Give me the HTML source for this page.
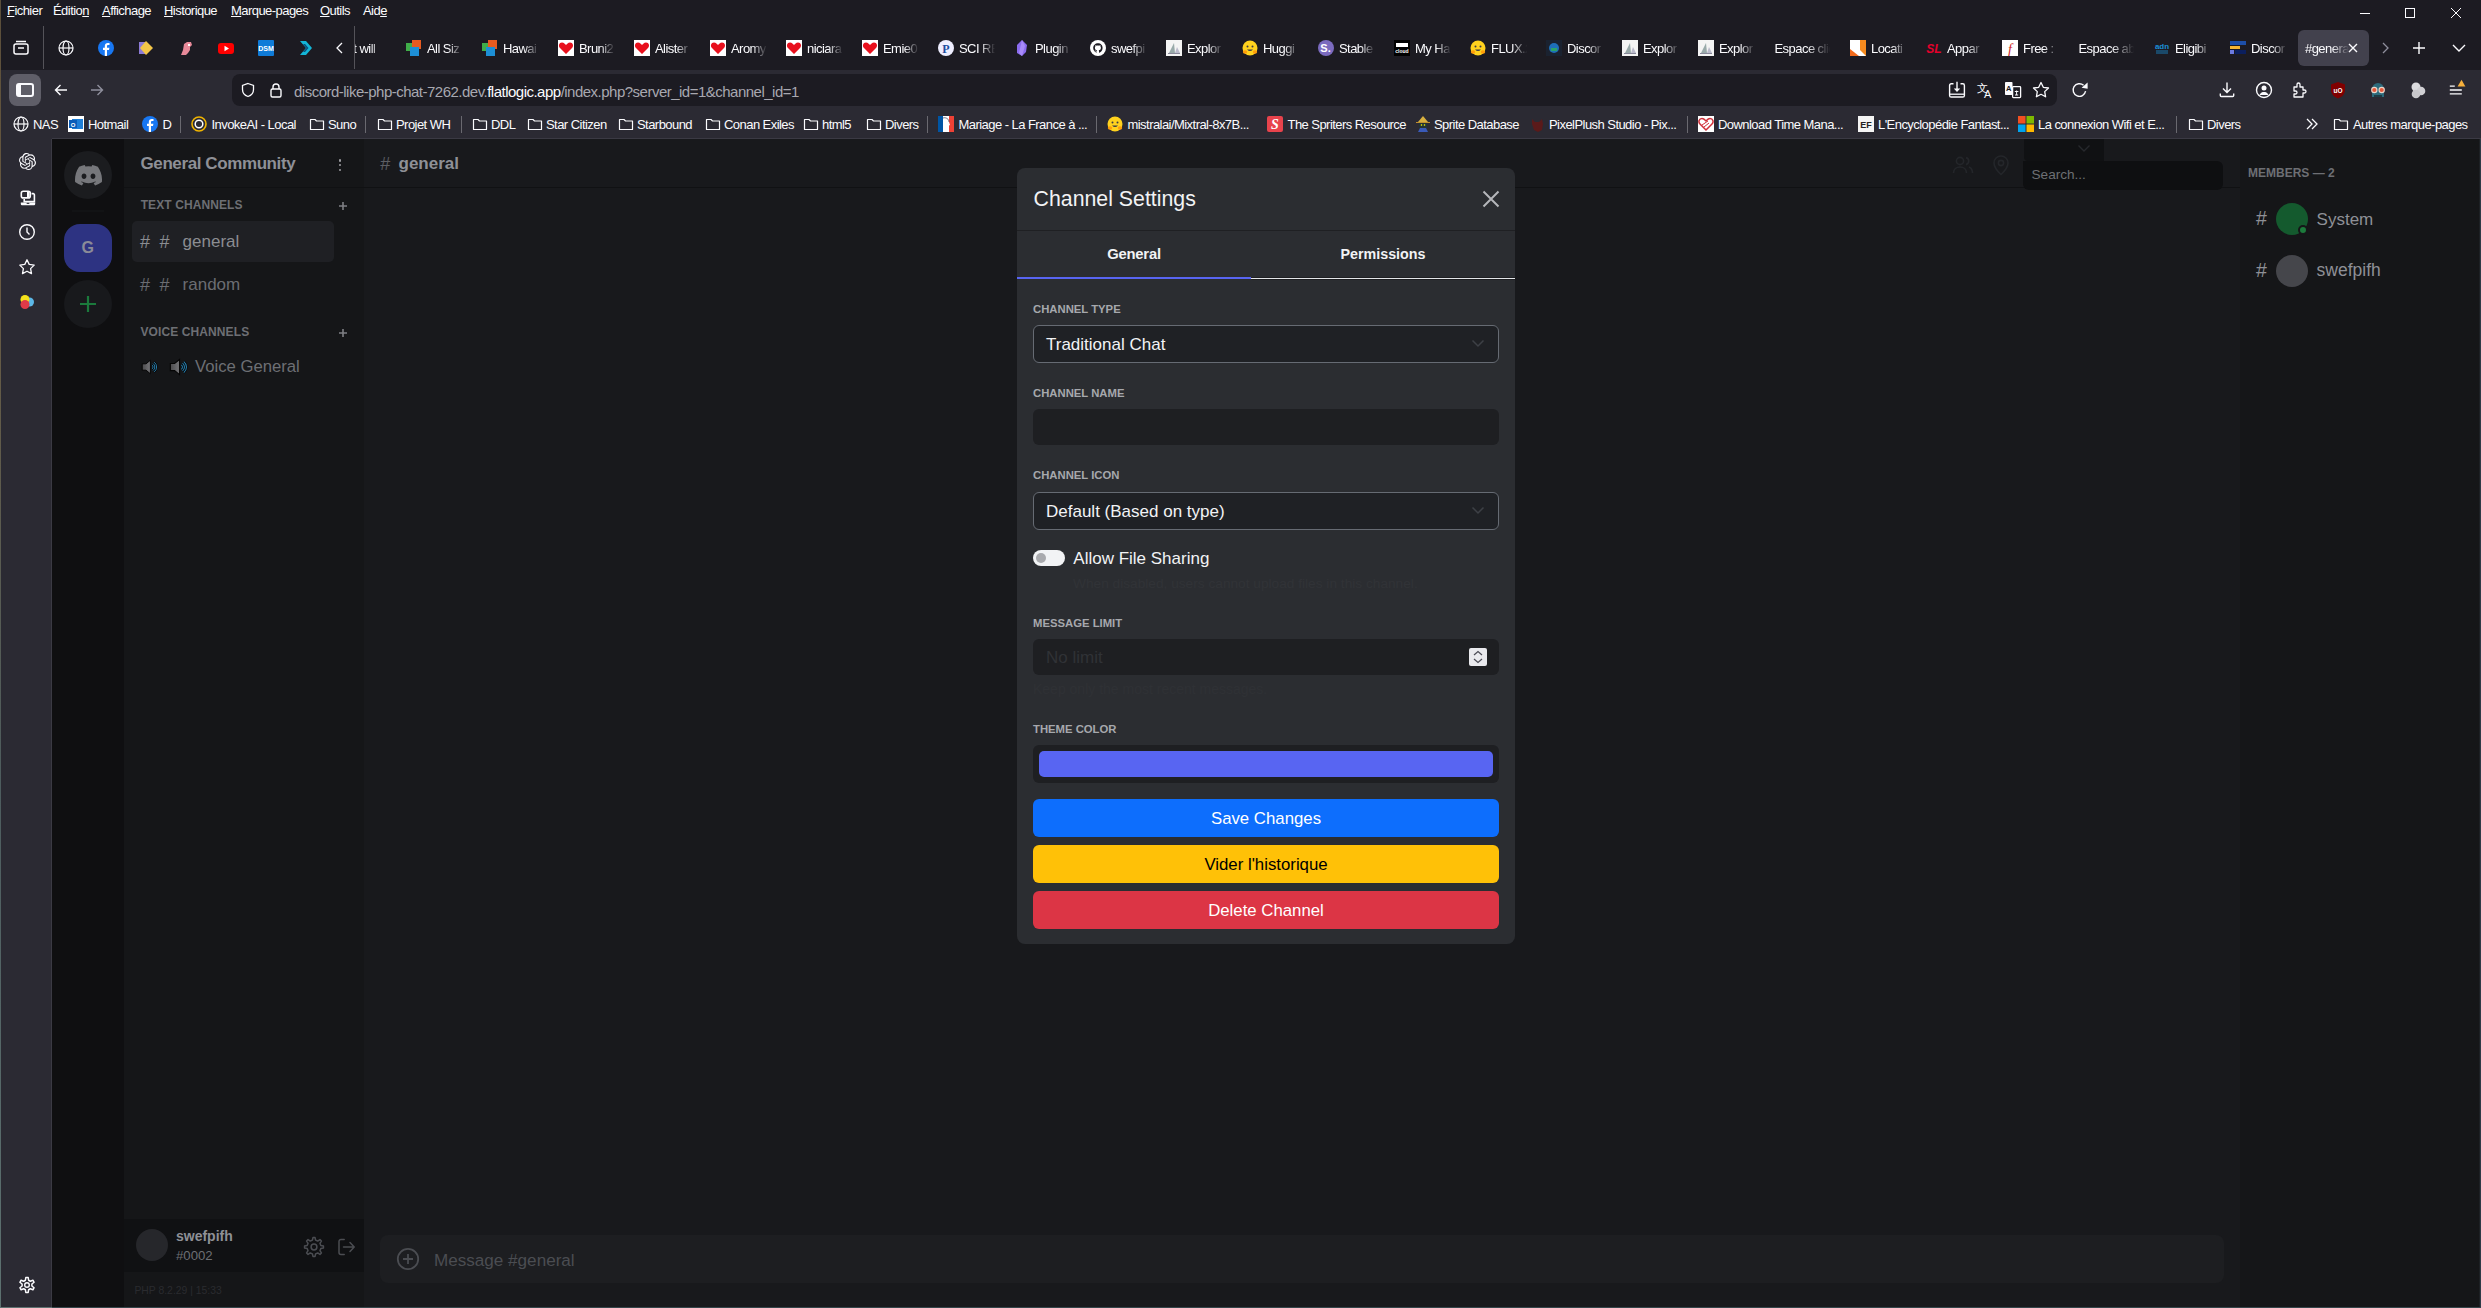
<!DOCTYPE html>
<html><head><meta charset="utf-8">
<style>
*{margin:0;padding:0;box-sizing:border-box}
html,body{width:2481px;height:1308px;overflow:hidden}
body{position:relative;background:linear-gradient(#5a4e3a,#6a5a40 20%,#4d5c5e 60%,#5d7170);font-family:"Liberation Sans",sans-serif;color:#fbfbfe}
.a{position:absolute;white-space:nowrap}
.r{position:absolute}
u{text-decoration:underline;text-underline-offset:1px;text-decoration-thickness:1px}
</style></head><body>
<div class="r" style="left:1px;top:0px;width:2480px;height:70px;background:#1c1b22;"></div>
<div class="r" style="left:1px;top:70px;width:2480px;height:69px;background:#2b2a33;"></div>
<div class="a" style="left:7px;top:3.60px;font-size:13px;line-height:13px;color:#fbfbfe;font-weight:400;letter-spacing:-0.55px"><u>F</u>ichier</div>
<div class="a" style="left:53px;top:3.60px;font-size:13px;line-height:13px;color:#fbfbfe;font-weight:400;letter-spacing:-0.55px">Éditio<u>n</u></div>
<div class="a" style="left:102px;top:3.60px;font-size:13px;line-height:13px;color:#fbfbfe;font-weight:400;letter-spacing:-0.55px"><u>A</u>ffichage</div>
<div class="a" style="left:164px;top:3.60px;font-size:13px;line-height:13px;color:#fbfbfe;font-weight:400;letter-spacing:-0.55px"><u>H</u>istorique</div>
<div class="a" style="left:231px;top:3.60px;font-size:13px;line-height:13px;color:#fbfbfe;font-weight:400;letter-spacing:-0.55px"><u>M</u>arque-pages</div>
<div class="a" style="left:320px;top:3.60px;font-size:13px;line-height:13px;color:#fbfbfe;font-weight:400;letter-spacing:-0.55px"><u>O</u>utils</div>
<div class="a" style="left:363px;top:3.60px;font-size:13px;line-height:13px;color:#fbfbfe;font-weight:400;letter-spacing:-0.55px">Aid<u>e</u></div>
<svg class="r" style="left:2359.0px;top:6.5px;" width="12" height="12" viewBox="0 0 12 12"><path d="M1 6.5h10" stroke="#fbfbfe" stroke-width="1"/></svg>
<svg class="r" style="left:2404.0px;top:6.5px;" width="12" height="12" viewBox="0 0 12 12"><rect x="1.5" y="1.5" width="9" height="9" fill="none" stroke="#fbfbfe" stroke-width="1"/></svg>
<svg class="r" style="left:2450.0px;top:6.5px;" width="12" height="12" viewBox="0 0 12 12"><path d="M1 1L11 11M11 1L1 11" stroke="#fbfbfe" stroke-width="1"/></svg>
<svg class="r" style="left:12.0px;top:39.0px;" width="18" height="18" viewBox="0 0 18 18"><rect x="2" y="5" width="14" height="10" rx="2" fill="none" stroke="#fbfbfe" stroke-width="1.5"/><path d="M4 2.5h10" stroke="#fbfbfe" stroke-width="1.5"/><path d="M6 9h6" stroke="#fbfbfe" stroke-width="1.5"/></svg>
<div class="r" style="left:43px;top:26px;width:1px;height:43px;background:rgba(251,251,254,0.25);"></div>
<div class="r" style="left:354px;top:26px;width:1px;height:43px;background:rgba(251,251,254,0.25);"></div>
<svg class="r" style="left:58.0px;top:40.0px;" width="16" height="16" viewBox="0 0 16 16"><circle cx="8" cy="8" r="7" fill="none" stroke="#fbfbfe" stroke-width="1.2"/><ellipse cx="8" cy="8" rx="3" ry="7" fill="none" stroke="#fbfbfe" stroke-width="1.2"/><path d="M1 8h14" stroke="#fbfbfe" stroke-width="1.2"/></svg>
<svg class="r" style="left:98.0px;top:40.0px;" width="16" height="16" viewBox="0 0 16 16"><circle cx="8" cy="8" r="8" fill="#1877f2"/><path d="M9 16V10h2l.4-2.3H9V6.3c0-.7.3-1.2 1.3-1.2h1.2V3.1C11 3 10.4 3 9.8 3 8 3 6.8 4 6.8 6v1.7H5V10h1.8v6z" fill="#fff"/></svg>
<svg class="r" style="left:138.0px;top:40.0px;" width="16" height="16" viewBox="0 0 16 16"><rect x="1" y="2" width="7" height="12" fill="#8c7bd6"/><path d="M8 1l7 7-7 7-6-7z" fill="#f3c648"/></svg>
<svg class="r" style="left:178.0px;top:40.0px;" width="16" height="16" viewBox="0 0 16 16"><path d="M3 15l2-5 1-6 3-2h4l1 3-2 2v3l-2 3-2 2z" fill="#e88a9a"/><rect x="10" y="4" width="2" height="2" fill="#fff"/></svg>
<svg class="r" style="left:218.0px;top:40.0px;" width="16" height="16" viewBox="0 0 16 16"><rect x="0" y="3" width="16" height="11" rx="3" fill="#ff0000"/><path d="M6.5 5.8v5.4L11 8.5z" fill="#fff"/></svg>
<svg class="r" style="left:258.0px;top:40.0px;" width="16" height="16" viewBox="0 0 16 16"><rect x="0" y="0" width="16" height="16" rx="1" fill="#0f7bd8"/><text x="8" y="11" font-size="7" font-family="Liberation Sans" font-weight="700" fill="#fff" text-anchor="middle">DSM</text></svg>
<svg class="r" style="left:298.0px;top:40.0px;" width="16" height="16" viewBox="0 0 16 16"><path d="M2 1h6l6 7-6 7H2l6-7z" fill="#13b5d6"/><path d="M5 4h2l3.5 4L7 12H5l3.5-4z" fill="#0a4d7a"/></svg>
<svg class="r" style="left:335.0px;top:40.0px;" width="10" height="16" viewBox="0 0 10 16"><path d="M7 3L2 8l5 5" fill="none" stroke="#fbfbfe" stroke-width="1.3"/></svg>
<div class="a" style="left:355px;top:39px;width:30px;height:20px;overflow:hidden;-webkit-mask-image:linear-gradient(to right,#000 50%,transparent)"><div style="position:absolute;left:-4px;top:0;font-size:13px;line-height:20px;color:#fbfbfe;letter-spacing:-0.55px">it will</div></div>
<svg class="r" style="left:405.5px;top:40.0px;" width="16" height="16" viewBox="0 0 16 16"><rect x="0" y="3" width="8" height="8" fill="#3fae49"/><rect x="6" y="0" width="9" height="9" fill="#e85b20"/><rect x="4" y="7" width="9" height="9" fill="#1d8fd6"/></svg>
<div class="a" style="left:427.0px;top:39px;width:38px;height:20px;overflow:hidden;-webkit-mask-image:linear-gradient(to right,#000 55%,transparent 95%)"><div style="position:absolute;left:0;top:0;font-size:13px;line-height:20px;color:#fbfbfe;letter-spacing:-0.55px">All Siz</div></div>
<svg class="r" style="left:481.5px;top:40.0px;" width="16" height="16" viewBox="0 0 16 16"><rect x="0" y="3" width="8" height="8" fill="#3fae49"/><rect x="6" y="0" width="9" height="9" fill="#e85b20"/><rect x="4" y="7" width="9" height="9" fill="#1d8fd6"/></svg>
<div class="a" style="left:503.0px;top:39px;width:38px;height:20px;overflow:hidden;-webkit-mask-image:linear-gradient(to right,#000 55%,transparent 95%)"><div style="position:absolute;left:0;top:0;font-size:13px;line-height:20px;color:#fbfbfe;letter-spacing:-0.55px">Hawai</div></div>
<svg class="r" style="left:557.5px;top:40.0px;" width="16" height="16" viewBox="0 0 16 16"><rect width="16" height="16" fill="#fff"/><path d="M8 14L2 8C0 6 1 2.5 4 2.5c2 0 3 1.5 4 2.5 1-1 2-2.5 4-2.5 3 0 4 3.5 2 5.5z" fill="#e8101d"/></svg>
<div class="a" style="left:579.0px;top:39px;width:38px;height:20px;overflow:hidden;-webkit-mask-image:linear-gradient(to right,#000 55%,transparent 95%)"><div style="position:absolute;left:0;top:0;font-size:13px;line-height:20px;color:#fbfbfe;letter-spacing:-0.55px">Bruni2</div></div>
<svg class="r" style="left:633.5px;top:40.0px;" width="16" height="16" viewBox="0 0 16 16"><rect width="16" height="16" fill="#fff"/><path d="M8 14L2 8C0 6 1 2.5 4 2.5c2 0 3 1.5 4 2.5 1-1 2-2.5 4-2.5 3 0 4 3.5 2 5.5z" fill="#e8101d"/></svg>
<div class="a" style="left:655.0px;top:39px;width:38px;height:20px;overflow:hidden;-webkit-mask-image:linear-gradient(to right,#000 55%,transparent 95%)"><div style="position:absolute;left:0;top:0;font-size:13px;line-height:20px;color:#fbfbfe;letter-spacing:-0.55px">Alister</div></div>
<svg class="r" style="left:709.5px;top:40.0px;" width="16" height="16" viewBox="0 0 16 16"><rect width="16" height="16" fill="#fff"/><path d="M8 14L2 8C0 6 1 2.5 4 2.5c2 0 3 1.5 4 2.5 1-1 2-2.5 4-2.5 3 0 4 3.5 2 5.5z" fill="#e8101d"/></svg>
<div class="a" style="left:731.0px;top:39px;width:38px;height:20px;overflow:hidden;-webkit-mask-image:linear-gradient(to right,#000 55%,transparent 95%)"><div style="position:absolute;left:0;top:0;font-size:13px;line-height:20px;color:#fbfbfe;letter-spacing:-0.55px">Aromy</div></div>
<svg class="r" style="left:785.5px;top:40.0px;" width="16" height="16" viewBox="0 0 16 16"><rect width="16" height="16" fill="#fff"/><path d="M8 14L2 8C0 6 1 2.5 4 2.5c2 0 3 1.5 4 2.5 1-1 2-2.5 4-2.5 3 0 4 3.5 2 5.5z" fill="#e8101d"/></svg>
<div class="a" style="left:807.0px;top:39px;width:38px;height:20px;overflow:hidden;-webkit-mask-image:linear-gradient(to right,#000 55%,transparent 95%)"><div style="position:absolute;left:0;top:0;font-size:13px;line-height:20px;color:#fbfbfe;letter-spacing:-0.55px">niciara</div></div>
<svg class="r" style="left:861.5px;top:40.0px;" width="16" height="16" viewBox="0 0 16 16"><rect width="16" height="16" fill="#fff"/><path d="M8 14L2 8C0 6 1 2.5 4 2.5c2 0 3 1.5 4 2.5 1-1 2-2.5 4-2.5 3 0 4 3.5 2 5.5z" fill="#e8101d"/></svg>
<div class="a" style="left:883.0px;top:39px;width:38px;height:20px;overflow:hidden;-webkit-mask-image:linear-gradient(to right,#000 55%,transparent 95%)"><div style="position:absolute;left:0;top:0;font-size:13px;line-height:20px;color:#fbfbfe;letter-spacing:-0.55px">Emie0</div></div>
<svg class="r" style="left:937.5px;top:40.0px;" width="16" height="16" viewBox="0 0 16 16"><circle cx="8" cy="8" r="8" fill="#eef"/><text x="8" y="12.5" font-size="12" font-family="Liberation Serif" font-weight="700" fill="#1c4ba0" text-anchor="middle">P</text></svg>
<div class="a" style="left:959.0px;top:39px;width:38px;height:20px;overflow:hidden;-webkit-mask-image:linear-gradient(to right,#000 55%,transparent 95%)"><div style="position:absolute;left:0;top:0;font-size:13px;line-height:20px;color:#fbfbfe;letter-spacing:-0.55px">SCI RE</div></div>
<svg class="r" style="left:1013.5px;top:40.0px;" width="16" height="16" viewBox="0 0 16 16"><path d="M8 0l5 5-1 7-4 4-5-3 0-8z" fill="#8b6cef"/><path d="M8 0l3 6-3 10-3-3z" fill="#a88bfa"/></svg>
<div class="a" style="left:1035.0px;top:39px;width:38px;height:20px;overflow:hidden;-webkit-mask-image:linear-gradient(to right,#000 55%,transparent 95%)"><div style="position:absolute;left:0;top:0;font-size:13px;line-height:20px;color:#fbfbfe;letter-spacing:-0.55px">Plugin</div></div>
<svg class="r" style="left:1089.5px;top:40.0px;" width="16" height="16" viewBox="0 0 16 16"><circle cx="8" cy="8" r="8" fill="#fff"/><path d="M8 3.2c-2.7 0-4.8 2.1-4.8 4.8 0 2.1 1.4 3.9 3.3 4.6.2 0 .3-.1.3-.2v-.9c-1.3.3-1.6-.6-1.6-.6-.2-.6-.5-.7-.5-.7-.4-.3 0-.3 0-.3.5 0 .7.5.7.5.4.7 1.1.5 1.4.4 0-.3.2-.5.3-.6-1.1-.1-2.2-.5-2.2-2.4 0-.5.2-1 .5-1.3-.1-.1-.2-.6 0-1.3 0 0 .4-.1 1.3.5.4-.1.8-.2 1.2-.2s.8.1 1.2.2c.9-.6 1.3-.5 1.3-.5.3.7.1 1.2 0 1.3.3.3.5.8.5 1.3 0 1.9-1.1 2.3-2.2 2.4.2.2.3.5.3.9v1.4c0 .1.1.3.3.2 1.9-.6 3.3-2.4 3.3-4.6C12.8 5.3 10.7 3.2 8 3.2z" fill="#1c1b22"/></svg>
<div class="a" style="left:1111.0px;top:39px;width:38px;height:20px;overflow:hidden;-webkit-mask-image:linear-gradient(to right,#000 55%,transparent 95%)"><div style="position:absolute;left:0;top:0;font-size:13px;line-height:20px;color:#fbfbfe;letter-spacing:-0.55px">swefpi</div></div>
<svg class="r" style="left:1165.5px;top:40.0px;" width="16" height="16" viewBox="0 0 16 16"><rect width="16" height="16" fill="#f4f4f4"/><path d="M3 13l5-10 1 10z" fill="#9aa"/><path d="M9 13l2-6 3 6z" fill="#bbc"/><path d="M2 13.5h12" stroke="#889" stroke-width="1"/></svg>
<div class="a" style="left:1187.0px;top:39px;width:38px;height:20px;overflow:hidden;-webkit-mask-image:linear-gradient(to right,#000 55%,transparent 95%)"><div style="position:absolute;left:0;top:0;font-size:13px;line-height:20px;color:#fbfbfe;letter-spacing:-0.55px">Explor</div></div>
<svg class="r" style="left:1241.5px;top:40.0px;" width="16" height="16" viewBox="0 0 16 16"><circle cx="8" cy="8" r="7.5" fill="#ffd21e"/><circle cx="5.5" cy="6.5" r="1" fill="#3a3b45"/><circle cx="10.5" cy="6.5" r="1" fill="#3a3b45"/><path d="M5 9.5q3 3 6 0" fill="#3a3b45"/><ellipse cx="3" cy="12" rx="2.2" ry="1.8" fill="#ff9d0b"/><ellipse cx="13" cy="12" rx="2.2" ry="1.8" fill="#ff9d0b"/></svg>
<div class="a" style="left:1263.0px;top:39px;width:38px;height:20px;overflow:hidden;-webkit-mask-image:linear-gradient(to right,#000 55%,transparent 95%)"><div style="position:absolute;left:0;top:0;font-size:13px;line-height:20px;color:#fbfbfe;letter-spacing:-0.55px">Huggi</div></div>
<svg class="r" style="left:1317.5px;top:40.0px;" width="16" height="16" viewBox="0 0 16 16"><circle cx="8" cy="8" r="8" fill="#7b6bbf"/><text x="7.5" y="12" font-size="11" font-family="Liberation Sans" font-weight="700" fill="#fff" text-anchor="middle">S.</text></svg>
<div class="a" style="left:1339.0px;top:39px;width:38px;height:20px;overflow:hidden;-webkit-mask-image:linear-gradient(to right,#000 55%,transparent 95%)"><div style="position:absolute;left:0;top:0;font-size:13px;line-height:20px;color:#fbfbfe;letter-spacing:-0.55px">Stable</div></div>
<svg class="r" style="left:1393.5px;top:40.0px;" width="16" height="16" viewBox="0 0 16 16"><rect width="16" height="16" fill="#000"/><rect x="2" y="3" width="12" height="4" fill="#fff"/><text x="8" y="13" font-size="5" font-family="Liberation Sans" font-weight="700" fill="#fff" text-anchor="middle">cloud</text></svg>
<div class="a" style="left:1415.0px;top:39px;width:38px;height:20px;overflow:hidden;-webkit-mask-image:linear-gradient(to right,#000 55%,transparent 95%)"><div style="position:absolute;left:0;top:0;font-size:13px;line-height:20px;color:#fbfbfe;letter-spacing:-0.55px">My Ha</div></div>
<svg class="r" style="left:1469.5px;top:40.0px;" width="16" height="16" viewBox="0 0 16 16"><circle cx="8" cy="8" r="7.5" fill="#ffd21e"/><circle cx="5.5" cy="6.5" r="1" fill="#3a3b45"/><circle cx="10.5" cy="6.5" r="1" fill="#3a3b45"/><path d="M5 9.5q3 3 6 0" fill="#3a3b45"/><ellipse cx="3" cy="12" rx="2.2" ry="1.8" fill="#ff9d0b"/><ellipse cx="13" cy="12" rx="2.2" ry="1.8" fill="#ff9d0b"/></svg>
<div class="a" style="left:1491.0px;top:39px;width:38px;height:20px;overflow:hidden;-webkit-mask-image:linear-gradient(to right,#000 55%,transparent 95%)"><div style="position:absolute;left:0;top:0;font-size:13px;line-height:20px;color:#fbfbfe;letter-spacing:-0.55px">FLUX.2</div></div>
<svg class="r" style="left:1545.5px;top:40.0px;" width="16" height="16" viewBox="0 0 16 16"><rect width="16" height="16" fill="#1a2230"/><circle cx="8" cy="8" r="5" fill="#1e6fb8"/><path d="M5 8h6v3H5z" fill="#2aa36b"/></svg>
<div class="a" style="left:1567.0px;top:39px;width:38px;height:20px;overflow:hidden;-webkit-mask-image:linear-gradient(to right,#000 55%,transparent 95%)"><div style="position:absolute;left:0;top:0;font-size:13px;line-height:20px;color:#fbfbfe;letter-spacing:-0.55px">Discor</div></div>
<svg class="r" style="left:1621.5px;top:40.0px;" width="16" height="16" viewBox="0 0 16 16"><rect width="16" height="16" fill="#f4f4f4"/><path d="M3 13l5-10 1 10z" fill="#9aa"/><path d="M9 13l2-6 3 6z" fill="#bbc"/><path d="M2 13.5h12" stroke="#889" stroke-width="1"/></svg>
<div class="a" style="left:1643.0px;top:39px;width:38px;height:20px;overflow:hidden;-webkit-mask-image:linear-gradient(to right,#000 55%,transparent 95%)"><div style="position:absolute;left:0;top:0;font-size:13px;line-height:20px;color:#fbfbfe;letter-spacing:-0.55px">Explor</div></div>
<svg class="r" style="left:1697.5px;top:40.0px;" width="16" height="16" viewBox="0 0 16 16"><rect width="16" height="16" fill="#f4f4f4"/><path d="M3 13l5-10 1 10z" fill="#9aa"/><path d="M9 13l2-6 3 6z" fill="#bbc"/><path d="M2 13.5h12" stroke="#889" stroke-width="1"/></svg>
<div class="a" style="left:1719.0px;top:39px;width:38px;height:20px;overflow:hidden;-webkit-mask-image:linear-gradient(to right,#000 55%,transparent 95%)"><div style="position:absolute;left:0;top:0;font-size:13px;line-height:20px;color:#fbfbfe;letter-spacing:-0.55px">Explor</div></div>
<div class="a" style="left:1774.5px;top:39px;width:58px;height:20px;overflow:hidden;-webkit-mask-image:linear-gradient(to right,#000 55%,transparent 95%)"><div style="position:absolute;left:0;top:0;font-size:13px;line-height:20px;color:#fbfbfe;letter-spacing:-0.55px">Espace clie</div></div>
<svg class="r" style="left:1849.5px;top:40.0px;" width="16" height="16" viewBox="0 0 16 16"><rect width="16" height="16" fill="#fff"/><path d="M0 16V9l9 7z" fill="#f26a1b"/><path d="M10 0h6v16l-6-6z" fill="#f68b1f"/></svg>
<div class="a" style="left:1871.0px;top:39px;width:38px;height:20px;overflow:hidden;-webkit-mask-image:linear-gradient(to right,#000 55%,transparent 95%)"><div style="position:absolute;left:0;top:0;font-size:13px;line-height:20px;color:#fbfbfe;letter-spacing:-0.55px">Locati</div></div>
<svg class="r" style="left:1925.5px;top:40.0px;" width="16" height="16" viewBox="0 0 16 16"><text x="8" y="13" font-size="12" font-family="Liberation Sans" font-weight="700" font-style="italic" fill="#e4002b" text-anchor="middle">SL</text></svg>
<div class="a" style="left:1947.0px;top:39px;width:38px;height:20px;overflow:hidden;-webkit-mask-image:linear-gradient(to right,#000 55%,transparent 95%)"><div style="position:absolute;left:0;top:0;font-size:13px;line-height:20px;color:#fbfbfe;letter-spacing:-0.55px">Appar</div></div>
<svg class="r" style="left:2001.5px;top:40.0px;" width="16" height="16" viewBox="0 0 16 16"><rect width="16" height="16" fill="#fff"/><text x="8" y="13.5" font-size="14" font-family="Liberation Serif" font-style="italic" fill="#cd1e25" text-anchor="middle">f</text></svg>
<div class="a" style="left:2023.0px;top:39px;width:38px;height:20px;overflow:hidden;-webkit-mask-image:linear-gradient(to right,#000 55%,transparent 95%)"><div style="position:absolute;left:0;top:0;font-size:13px;line-height:20px;color:#fbfbfe;letter-spacing:-0.55px">Free :</div></div>
<div class="a" style="left:2078.5px;top:39px;width:58px;height:20px;overflow:hidden;-webkit-mask-image:linear-gradient(to right,#000 55%,transparent 95%)"><div style="position:absolute;left:0;top:0;font-size:13px;line-height:20px;color:#fbfbfe;letter-spacing:-0.55px">Espace abc</div></div>
<svg class="r" style="left:2153.5px;top:40.0px;" width="16" height="16" viewBox="0 0 16 16"><text x="8" y="9" font-size="8" font-family="Liberation Sans" font-weight="700" fill="#1b8fd6" text-anchor="middle">adn</text><path d="M2 11h12M2 13h12" stroke="#1b8fd6" stroke-width=".8"/></svg>
<div class="a" style="left:2175.0px;top:39px;width:38px;height:20px;overflow:hidden;-webkit-mask-image:linear-gradient(to right,#000 55%,transparent 95%)"><div style="position:absolute;left:0;top:0;font-size:13px;line-height:20px;color:#fbfbfe;letter-spacing:-0.55px">Eligibi</div></div>
<svg class="r" style="left:2229.5px;top:40.0px;" width="16" height="16" viewBox="0 0 16 16"><rect x="0" y="1" width="16" height="4" fill="#1d4fa8"/><rect x="0" y="6" width="10" height="3" fill="#f6b632"/><rect x="0" y="10" width="4" height="4" fill="#6c7ae0"/><rect x="5" y="10" width="11" height="4" fill="#0b1f5e"/></svg>
<div class="a" style="left:2251.0px;top:39px;width:38px;height:20px;overflow:hidden;-webkit-mask-image:linear-gradient(to right,#000 55%,transparent 95%)"><div style="position:absolute;left:0;top:0;font-size:13px;line-height:20px;color:#fbfbfe;letter-spacing:-0.55px">Discor</div></div>
<div class="r" style="left:2297.5px;top:30px;width:71.5px;height:36px;background:#42414d;border-radius:6px"></div>
<div class="a" style="left:2305px;top:39px;width:44px;height:20px;overflow:hidden;-webkit-mask-image:linear-gradient(to right,#000 60%,transparent)"><div style="position:absolute;left:0;top:0;font-size:13px;line-height:20px;color:#fbfbfe;letter-spacing:-0.55px">#general</div></div>
<svg class="r" style="left:2347.0px;top:42.0px;" width="12" height="12" viewBox="0 0 12 12"><path d="M2 2L10 10M10 2L2 10" stroke="#fbfbfe" stroke-width="1.4"/></svg>
<svg class="r" style="left:2380.0px;top:40.0px;" width="10" height="16" viewBox="0 0 10 16"><path d="M3 3l5 5-5 5" fill="none" stroke="#8f8f9d" stroke-width="1.3"/></svg>
<svg class="r" style="left:2411.0px;top:40.0px;" width="16" height="16" viewBox="0 0 16 16"><path d="M8 2v12M2 8h12" stroke="#fbfbfe" stroke-width="1.4"/></svg>
<svg class="r" style="left:2451.0px;top:40.0px;" width="16" height="16" viewBox="0 0 16 16"><path d="M2 5l6 6 6-6" fill="none" stroke="#fbfbfe" stroke-width="1.4"/></svg>
<div class="r" style="left:9px;top:74px;width:32px;height:32px;background:#5f5e68;border-radius:8px"></div>
<svg class="r" style="left:16.0px;top:83.0px;" width="18" height="14" viewBox="0 0 18 14"><rect x="1" y="1" width="16" height="12" rx="2" fill="none" stroke="#fbfbfe" stroke-width="2"/><rect x="1" y="1" width="4" height="12" rx="1" fill="#fbfbfe"/></svg>
<svg class="r" style="left:53.0px;top:82.0px;" width="16" height="16" viewBox="0 0 16 16"><path d="M14 8H2.5M7.5 3L2.5 8l5 5" fill="none" stroke="#fbfbfe" stroke-width="1.4"/></svg>
<svg class="r" style="left:89.0px;top:82.0px;" width="16" height="16" viewBox="0 0 16 16"><path d="M2 8h11.5M8.5 3l5 5-5 5" fill="none" stroke="#8f8f9d" stroke-width="1.4"/></svg>
<div class="r" style="left:232px;top:74px;width:1825px;height:32px;background:#1c1b22;border-radius:8px"></div>
<svg class="r" style="left:240.0px;top:82.0px;" width="16" height="16" viewBox="0 0 16 16"><path d="M8 1.5l5.5 2v4c0 3.5-2.5 6-5.5 7-3-1-5.5-3.5-5.5-7v-4z" fill="none" stroke="#fbfbfe" stroke-width="1.3"/></svg>
<svg class="r" style="left:268.0px;top:82.0px;" width="16" height="16" viewBox="0 0 16 16"><rect x="3" y="7" width="10" height="8" rx="1.5" fill="none" stroke="#fbfbfe" stroke-width="1.4"/><path d="M5 7V5a3 3 0 0 1 6 0v2" fill="none" stroke="#fbfbfe" stroke-width="1.4"/></svg>
<div class="a" style="left:294px;top:83.55px;font-size:15px;line-height:15px;color:#fbfbfe;font-weight:400;letter-spacing:-0.51px"><span style="color:#a8a8b0">discord-like-php-chat-7262.dev.</span>flatlogic.app<span style="color:#a8a8b0">/index.php?server_id=1&amp;channel_id=1</span></div>
<svg class="r" style="left:1948.0px;top:81.0px;" width="18" height="18" viewBox="0 0 18 18"><path d="M5.5 2.8H3.2a1.6 1.6 0 0 0-1.6 1.6v10a1.6 1.6 0 0 0 1.6 1.6h11.6a1.6 1.6 0 0 0 1.6-1.6v-10a1.6 1.6 0 0 0-1.6-1.6h-2.3" fill="none" stroke="#fbfbfe" stroke-width="1.4"/><path d="M1.6 13.2h14.8" stroke="#fbfbfe" stroke-width="1.3"/><path d="M9 0.8v8" stroke="#fbfbfe" stroke-width="1.4"/><path d="M5.8 7.6h6.4L9 11z" fill="#fbfbfe"/></svg>
<svg class="r" style="left:1976.0px;top:81.0px;" width="18" height="18" viewBox="0 0 18 18"><text x="1" y="11" font-size="11" font-family="Liberation Sans" fill="#fbfbfe">文</text><text x="8" y="17" font-size="11" font-family="Liberation Sans" fill="#fbfbfe">A</text></svg>
<svg class="r" style="left:2004.0px;top:81.0px;" width="18" height="18" viewBox="0 0 18 18"><rect x="1" y="1" width="7.5" height="13" rx=".8" fill="#fbfbfe"/><text x="4.8" y="9.5" font-size="7.5" font-family="Liberation Sans" font-weight="700" fill="#1c1b22" text-anchor="middle">A</text><rect x="8.6" y="5.6" width="8" height="11" rx=".8" fill="#1c1b22" stroke="#fbfbfe" stroke-width="1.3"/><path d="M10.8 10.5h3.6M12.6 9.5v4.5M11 14h3.2" stroke="#fbfbfe" stroke-width="1"/></svg>
<svg class="r" style="left:2032.0px;top:81.0px;" width="18" height="18" viewBox="0 0 18 18"><path d="M9 1.5l2.3 4.8 5.2.7-3.8 3.6.9 5.2L9 13.3l-4.6 2.5.9-5.2L1.5 7l5.2-.7z" fill="none" stroke="#fbfbfe" stroke-width="1.3" stroke-linejoin="round"/></svg>
<svg class="r" style="left:2071.0px;top:81.0px;" width="18" height="18" viewBox="0 0 18 18"><path d="M14.6 10.2A6.3 6.3 0 1 1 12.6 4.3" fill="none" stroke="#fbfbfe" stroke-width="1.4"/><path d="M10.6 6.8L16.6 1.6v6.2z" fill="#fbfbfe"/></svg>
<svg class="r" style="left:2218.0px;top:81.0px;" width="18" height="18" viewBox="0 0 18 18"><path d="M9 1.5v10M5 7.5l4 4 4-4" fill="none" stroke="#fbfbfe" stroke-width="1.4"/><path d="M2.3 12.5v2a1 1 0 0 0 1 1h11.4a1 1 0 0 0 1-1v-2" fill="none" stroke="#fbfbfe" stroke-width="1.4"/></svg>
<svg class="r" style="left:2255.0px;top:81.0px;" width="18" height="18" viewBox="0 0 18 18"><circle cx="9" cy="9" r="7.5" fill="none" stroke="#fbfbfe" stroke-width="1.4"/><circle cx="9" cy="7" r="2.5" fill="#fbfbfe"/><path d="M4.5 14c1-2.5 3-3 4.5-3s3.5.5 4.5 3" fill="#fbfbfe"/></svg>
<svg class="r" style="left:2291.0px;top:81.0px;" width="18" height="18" viewBox="0 0 18 18"><path d="M3 6h3V3.5a1.5 1.5 0 0 1 3 0V6h3v3h1.5a1.5 1.5 0 0 1 0 3H12v4H3v-3h1.5a1.5 1.5 0 0 0 0-3H3z" fill="none" stroke="#fbfbfe" stroke-width="1.3" stroke-linejoin="round"/></svg>
<svg class="r" style="left:2329.0px;top:81.0px;" width="18" height="18" viewBox="0 0 18 18"><path d="M9 1l7 2.5V9c0 4-3 7-7 8.5C5 16 2 13 2 9V3.5z" fill="#800000"/><text x="9" y="11.5" font-size="6.5" font-family="Liberation Sans" font-weight="700" fill="#fff" text-anchor="middle">uO</text></svg>
<svg class="r" style="left:2369.0px;top:81.0px;" width="18" height="18" viewBox="0 0 18 18"><path d="M3 8a6 6 0 0 1 12 0v8H3z" fill="#2d6b7c"/><rect x="5" y="14" width="8" height="2" fill="#1d3b44"/><circle cx="5.3" cy="9" r="3.2" fill="#e9d7cc"/><circle cx="12.7" cy="9" r="3.2" fill="#e9d7cc"/><circle cx="5.3" cy="9" r="2.1" fill="#e4583a"/><circle cx="12.7" cy="9" r="2.1" fill="#e4583a"/></svg>
<svg class="r" style="left:2409.0px;top:81.0px;" width="18" height="18" viewBox="0 0 18 18"><circle cx="7" cy="6" r="4.5" fill="#dcdcdf"/><circle cx="12" cy="10" r="4.3" fill="#d0d0d4"/><circle cx="7" cy="13" r="4.3" fill="#c8c8cc"/></svg>
<svg class="r" style="left:2445.0px;top:81.0px;overflow:visible" width="20" height="18" viewBox="0 0 20 18"><path d="M4.8 5.2h5M4.8 9h12M4.8 12.8h12" stroke="#fbfbfe" stroke-width="1.3"/><path d="M16.5 -1.2l3.9 6.8h-7.8z" fill="#f6b03c"/></svg>
<svg class="r" style="left:13.0px;top:116.0px;" width="16" height="16" viewBox="0 0 16 16"><circle cx="8" cy="8" r="7" fill="none" stroke="#fbfbfe" stroke-width="1.2"/><ellipse cx="8" cy="8" rx="3" ry="7" fill="none" stroke="#fbfbfe" stroke-width="1.2"/><path d="M1 8h14" stroke="#fbfbfe" stroke-width="1.2"/></svg>
<div class="a" style="left:33px;top:118.25px;font-size:13px;line-height:13px;color:#fbfbfe;font-weight:400;letter-spacing:-0.55px">NAS</div>
<svg class="r" style="left:68.0px;top:116.0px;" width="16" height="16" viewBox="0 0 16 16"><rect width="16" height="16" fill="#fff"/><rect x="4" y="3" width="11" height="10" fill="#1e7fd8"/><rect x="1" y="4" width="8" height="8" fill="#0a5cb8"/><text x="5" y="10.5" font-size="6" font-family="Liberation Sans" font-weight="700" fill="#fff" text-anchor="middle">O</text></svg>
<div class="a" style="left:88px;top:118.25px;font-size:13px;line-height:13px;color:#fbfbfe;font-weight:400;letter-spacing:-0.55px">Hotmail</div>
<svg class="r" style="left:142.0px;top:116.0px;" width="16" height="16" viewBox="0 0 16 16"><circle cx="8" cy="8" r="8" fill="#1877f2"/><path d="M9 16V10h2l.4-2.3H9V6.3c0-.7.3-1.2 1.3-1.2h1.2V3.1C11 3 10.4 3 9.8 3 8 3 6.8 4 6.8 6v1.7H5V10h1.8v6z" fill="#fff"/></svg>
<div class="a" style="left:162.5px;top:118.25px;font-size:13px;line-height:13px;color:#fbfbfe;font-weight:400;letter-spacing:-0.55px">D</div>
<div class="r" style="left:180px;top:116px;width:1px;height:17px;background:rgba(251,251,254,0.3);"></div>
<svg class="r" style="left:191.0px;top:116.0px;" width="16" height="16" viewBox="0 0 16 16"><circle cx="8" cy="8" r="7" fill="none" stroke="#f0b400" stroke-width="1.6"/><circle cx="8" cy="8" r="3.8" fill="none" stroke="#fff" stroke-width="1.5"/></svg>
<div class="a" style="left:211.5px;top:118.25px;font-size:13px;line-height:13px;color:#fbfbfe;font-weight:400;letter-spacing:-0.55px">InvokeAI - Local</div>
<svg class="r" style="left:308.5px;top:116.0px;" width="16" height="16" viewBox="0 0 16 16"><path d="M1.5 3.5h4.5l1.5 1.5h7v8.5h-13z" fill="none" stroke="#fbfbfe" stroke-width="1.2" stroke-linejoin="round"/></svg>
<div class="a" style="left:328px;top:118.25px;font-size:13px;line-height:13px;color:#fbfbfe;font-weight:400;letter-spacing:-0.55px">Suno</div>
<div class="r" style="left:365px;top:116px;width:1px;height:17px;background:rgba(251,251,254,0.3);"></div>
<svg class="r" style="left:376.5px;top:116.0px;" width="16" height="16" viewBox="0 0 16 16"><path d="M1.5 3.5h4.5l1.5 1.5h7v8.5h-13z" fill="none" stroke="#fbfbfe" stroke-width="1.2" stroke-linejoin="round"/></svg>
<div class="a" style="left:396px;top:118.25px;font-size:13px;line-height:13px;color:#fbfbfe;font-weight:400;letter-spacing:-0.55px">Projet WH</div>
<div class="r" style="left:461px;top:116px;width:1px;height:17px;background:rgba(251,251,254,0.3);"></div>
<svg class="r" style="left:472.0px;top:116.0px;" width="16" height="16" viewBox="0 0 16 16"><path d="M1.5 3.5h4.5l1.5 1.5h7v8.5h-13z" fill="none" stroke="#fbfbfe" stroke-width="1.2" stroke-linejoin="round"/></svg>
<div class="a" style="left:491px;top:118.25px;font-size:13px;line-height:13px;color:#fbfbfe;font-weight:400;letter-spacing:-0.55px">DDL</div>
<svg class="r" style="left:527.0px;top:116.0px;" width="16" height="16" viewBox="0 0 16 16"><path d="M1.5 3.5h4.5l1.5 1.5h7v8.5h-13z" fill="none" stroke="#fbfbfe" stroke-width="1.2" stroke-linejoin="round"/></svg>
<div class="a" style="left:546px;top:118.25px;font-size:13px;line-height:13px;color:#fbfbfe;font-weight:400;letter-spacing:-0.55px">Star Citizen</div>
<svg class="r" style="left:618.0px;top:116.0px;" width="16" height="16" viewBox="0 0 16 16"><path d="M1.5 3.5h4.5l1.5 1.5h7v8.5h-13z" fill="none" stroke="#fbfbfe" stroke-width="1.2" stroke-linejoin="round"/></svg>
<div class="a" style="left:637px;top:118.25px;font-size:13px;line-height:13px;color:#fbfbfe;font-weight:400;letter-spacing:-0.55px">Starbound</div>
<svg class="r" style="left:705.0px;top:116.0px;" width="16" height="16" viewBox="0 0 16 16"><path d="M1.5 3.5h4.5l1.5 1.5h7v8.5h-13z" fill="none" stroke="#fbfbfe" stroke-width="1.2" stroke-linejoin="round"/></svg>
<div class="a" style="left:724px;top:118.25px;font-size:13px;line-height:13px;color:#fbfbfe;font-weight:400;letter-spacing:-0.55px">Conan Exiles</div>
<svg class="r" style="left:803.0px;top:116.0px;" width="16" height="16" viewBox="0 0 16 16"><path d="M1.5 3.5h4.5l1.5 1.5h7v8.5h-13z" fill="none" stroke="#fbfbfe" stroke-width="1.2" stroke-linejoin="round"/></svg>
<div class="a" style="left:822px;top:118.25px;font-size:13px;line-height:13px;color:#fbfbfe;font-weight:400;letter-spacing:-0.55px">html5</div>
<svg class="r" style="left:866.0px;top:116.0px;" width="16" height="16" viewBox="0 0 16 16"><path d="M1.5 3.5h4.5l1.5 1.5h7v8.5h-13z" fill="none" stroke="#fbfbfe" stroke-width="1.2" stroke-linejoin="round"/></svg>
<div class="a" style="left:885px;top:118.25px;font-size:13px;line-height:13px;color:#fbfbfe;font-weight:400;letter-spacing:-0.55px">Divers</div>
<div class="r" style="left:927px;top:116px;width:1px;height:17px;background:rgba(251,251,254,0.3);"></div>
<svg class="r" style="left:938.0px;top:116.0px;" width="16" height="16" viewBox="0 0 16 16"><rect width="16" height="16" fill="#fff"/><rect x="0" y="0" width="5" height="16" fill="#0055a4"/><rect x="11" y="0" width="5" height="16" fill="#ef4135"/><path d="M5 2c3-1 6 1 6 4l1 3-2 1v3l-3 1-2 2z" fill="#fff"/><path d="M5 2c3-1 6 1 6 4" fill="none" stroke="#556" stroke-width=".8"/></svg>
<div class="a" style="left:958.5px;top:118.25px;font-size:13px;line-height:13px;color:#fbfbfe;font-weight:400;letter-spacing:-0.55px">Mariage - La France à ...</div>
<div class="r" style="left:1096px;top:116px;width:1px;height:17px;background:rgba(251,251,254,0.3);"></div>
<svg class="r" style="left:1107.0px;top:116.0px;" width="16" height="16" viewBox="0 0 16 16"><circle cx="8" cy="8" r="7.5" fill="#ffd21e"/><circle cx="5.5" cy="6.5" r="1" fill="#3a3b45"/><circle cx="10.5" cy="6.5" r="1" fill="#3a3b45"/><path d="M5 9.5q3 3 6 0" fill="#3a3b45"/><ellipse cx="3" cy="12" rx="2.2" ry="1.8" fill="#ff9d0b"/><ellipse cx="13" cy="12" rx="2.2" ry="1.8" fill="#ff9d0b"/></svg>
<div class="a" style="left:1127.5px;top:118.25px;font-size:13px;line-height:13px;color:#fbfbfe;font-weight:400;letter-spacing:-0.55px">mistralai/Mixtral-8x7B...</div>
<svg class="r" style="left:1267.0px;top:116.0px;" width="16" height="16" viewBox="0 0 16 16"><rect width="16" height="16" rx="2" fill="#e8434c"/><text x="8" y="13" font-size="14" font-family="Liberation Serif" font-style="italic" font-weight="700" fill="#fff" text-anchor="middle">S</text></svg>
<div class="a" style="left:1287.5px;top:118.25px;font-size:13px;line-height:13px;color:#fbfbfe;font-weight:400;letter-spacing:-0.55px">The Spriters Resource</div>
<svg class="r" style="left:1415.0px;top:116.0px;" width="16" height="16" viewBox="0 0 16 16"><path d="M8 0l5 6H3z" fill="#d8b040"/><path d="M1 6h14v1H1z" fill="#c09030"/><rect x="4" y="7" width="8" height="5" fill="#233"/><circle cx="6.5" cy="9" r=".8" fill="#ff0"/><circle cx="9.5" cy="9" r=".8" fill="#ff0"/><path d="M3 16l2-4h6l2 4z" fill="#3a5ab8"/></svg>
<div class="a" style="left:1434px;top:118.25px;font-size:13px;line-height:13px;color:#fbfbfe;font-weight:400;letter-spacing:-0.55px">Sprite Database</div>
<svg class="r" style="left:1529.0px;top:116.0px;" width="16" height="16" viewBox="0 0 16 16"><path d="M3 3l3 3h4l3-3 1 5-1 6-4 2-4-2-2-6z" fill="#5a1a1a"/></svg>
<div class="a" style="left:1549px;top:118.25px;font-size:13px;line-height:13px;color:#fbfbfe;font-weight:400;letter-spacing:-0.55px">PixelPlush Studio - Pix...</div>
<div class="r" style="left:1687px;top:116px;width:1px;height:17px;background:rgba(251,251,254,0.3);"></div>
<svg class="r" style="left:1698.0px;top:116.0px;" width="16" height="16" viewBox="0 0 16 16"><rect width="16" height="16" fill="#fff"/><path d="M8 14L2 8C0 6 1 2.5 4 2.5c2 0 3 1.5 4 2.5 1-1 2-2.5 4-2.5 3 0 4 3.5 2 5.5z" fill="none" stroke="#d0303a" stroke-width="1.5"/><path d="M4 9l6-4M6 11l5-4" stroke="#d0303a" stroke-width="1"/></svg>
<div class="a" style="left:1718px;top:118.25px;font-size:13px;line-height:13px;color:#fbfbfe;font-weight:400;letter-spacing:-0.55px">Download Time Mana...</div>
<svg class="r" style="left:1858.0px;top:116.0px;" width="16" height="16" viewBox="0 0 16 16"><rect width="16" height="16" fill="#f4f4f4"/><text x="8" y="12" font-size="9" font-family="Liberation Sans" font-weight="700" fill="#222" text-anchor="middle">EF</text></svg>
<div class="a" style="left:1878px;top:118.25px;font-size:13px;line-height:13px;color:#fbfbfe;font-weight:400;letter-spacing:-0.55px">L&#x27;Encyclopédie Fantast...</div>
<svg class="r" style="left:2018.0px;top:116.0px;" width="16" height="16" viewBox="0 0 16 16"><rect x="0" y="0" width="7.5" height="7.5" fill="#f25022"/><rect x="8.5" y="0" width="7.5" height="7.5" fill="#7fba00"/><rect x="0" y="8.5" width="7.5" height="7.5" fill="#00a4ef"/><rect x="8.5" y="8.5" width="7.5" height="7.5" fill="#ffb900"/></svg>
<div class="a" style="left:2038px;top:118.25px;font-size:13px;line-height:13px;color:#fbfbfe;font-weight:400;letter-spacing:-0.55px">La connexion Wifi et E...</div>
<div class="r" style="left:2176px;top:116px;width:1px;height:17px;background:rgba(251,251,254,0.3);"></div>
<svg class="r" style="left:2187.5px;top:116.0px;" width="16" height="16" viewBox="0 0 16 16"><path d="M1.5 3.5h4.5l1.5 1.5h7v8.5h-13z" fill="none" stroke="#fbfbfe" stroke-width="1.2" stroke-linejoin="round"/></svg>
<div class="a" style="left:2207px;top:118.25px;font-size:13px;line-height:13px;color:#fbfbfe;font-weight:400;letter-spacing:-0.55px">Divers</div>
<svg class="r" style="left:2304.0px;top:116.0px;" width="16" height="16" viewBox="0 0 16 16"><path d="M3 3l5 5-5 5M8 3l5 5-5 5" fill="none" stroke="#fbfbfe" stroke-width="1.3"/></svg>
<svg class="r" style="left:2333.0px;top:116.0px;" width="16" height="16" viewBox="0 0 16 16"><path d="M1.5 3.5h4.5l1.5 1.5h7v8.5h-13z" fill="none" stroke="#fbfbfe" stroke-width="1.2" stroke-linejoin="round"/></svg>
<div class="a" style="left:2353px;top:118.25px;font-size:13px;line-height:13px;color:#fbfbfe;font-weight:400;letter-spacing:-0.55px">Autres marque-pages</div>
<div class="r" style="left:1px;top:139px;width:51px;height:1168px;background:#2b2a33;"></div>
<div class="r" style="left:51px;top:139px;width:1px;height:1168px;background:#3b3a44;"></div>
<div class="r" style="left:52px;top:138px;width:2429px;height:1px;background:#3b3a44;"></div>
<svg class="r" style="left:18.5px;top:152.5px;" width="17" height="17" viewBox="0 0 17 17"><path transform="scale(.7083)" d="M22.2819 9.8211a5.9847 5.9847 0 0 0-.5157-4.9108 6.0462 6.0462 0 0 0-6.5098-2.9A6.0651 6.0651 0 0 0 4.9807 4.1818a5.9847 5.9847 0 0 0-3.9977 2.9 6.0462 6.0462 0 0 0 .7427 7.0966 5.98 5.98 0 0 0 .511 4.9107 6.051 6.051 0 0 0 6.5146 2.9001A5.9847 5.9847 0 0 0 13.2599 24a6.0557 6.0557 0 0 0 5.7718-4.2058 5.9894 5.9894 0 0 0 3.9977-2.9001 6.0557 6.0557 0 0 0-.7475-7.0729zm-9.022 12.6081a4.4755 4.4755 0 0 1-2.8764-1.0408l.1419-.0804 4.7783-2.7582a.7948.7948 0 0 0 .3927-.6813v-6.7369l2.02 1.1686a.071.071 0 0 1 .038.052v5.5826a4.504 4.504 0 0 1-4.4945 4.4944zm-9.6607-4.1254a4.4708 4.4708 0 0 1-.5346-3.0137l.142.0852 4.783 2.7582a.7712.7712 0 0 0 .7806 0l5.8428-3.3685v2.3324a.0804.0804 0 0 1-.0332.0615L9.74 19.9502a4.4992 4.4992 0 0 1-6.1408-1.6464zM2.3408 7.8956a4.485 4.485 0 0 1 2.3655-1.9728V11.6a.7664.7664 0 0 0 .3879.6765l5.8144 3.3543-2.0201 1.1685a.0757.0757 0 0 1-.071 0l-4.8303-2.7865A4.504 4.504 0 0 1 2.3408 7.872zm16.5963 3.8558L13.1038 8.364 15.1192 7.2a.0757.0757 0 0 1 .071 0l4.8303 2.7913a4.4944 4.4944 0 0 1-.6765 8.1042v-5.6772a.79.79 0 0 0-.407-.667zm2.0107-3.0231l-.142-.0852-4.7735-2.7818a.7759.7759 0 0 0-.7854 0L9.409 9.2297V6.8974a.0662.0662 0 0 1 .0284-.0615l4.8303-2.7866a4.4992 4.4992 0 0 1 6.6802 4.66zM8.3065 12.863l-2.02-1.1638a.0804.0804 0 0 1-.038-.0567V6.0742a4.4992 4.4992 0 0 1 7.3757-3.4537l-.142.0805L8.704 5.459a.7948.7948 0 0 0-.3927.6813zm1.0976-2.3654l2.602-1.4998 2.6069 1.4998v2.9994l-2.5974 1.5-2.6067-1.5Z" fill="#fbfbfe"/></svg>
<svg class="r" style="left:18.5px;top:188.5px;" width="18" height="18" viewBox="0 0 18 18"><rect x="2.3" y="2.3" width="9" height="6.6" rx="2" fill="none" stroke="#fbfbfe" stroke-width="1.6"/><rect x="8" y="3" width="2.6" height="5.2" fill="#fbfbfe"/><path d="M12.6 4.6h1.6a1.2 1.2 0 0 1 1.2 1.2V12.6H5.2V10" fill="none" stroke="#fbfbfe" stroke-width="1.6"/><path d="M1.8 13.6h14.4v1.4a1.2 1.2 0 0 1-1.2 1.2H3a1.2 1.2 0 0 1-1.2-1.2z" fill="#fbfbfe"/><ellipse cx="9" cy="14.3" rx="1.6" ry=".6" fill="#2b2a33"/></svg>
<svg class="r" style="left:18.0px;top:223.0px;" width="18" height="18" viewBox="0 0 18 18"><circle cx="9" cy="9" r="7.3" fill="none" stroke="#fbfbfe" stroke-width="1.4"/><path d="M9 4.5V9l2.5 2.5" fill="none" stroke="#fbfbfe" stroke-width="1.4"/></svg>
<svg class="r" style="left:18.0px;top:258.0px;" width="18" height="18" viewBox="0 0 18 18"><path d="M9 1.8l2.2 4.6 5 .7-3.6 3.5.9 5L9 13.2l-4.5 2.4.9-5L1.8 7.1l5-.7z" fill="none" stroke="#fbfbfe" stroke-width="1.3" stroke-linejoin="round"/></svg>
<svg class="r" style="left:18.0px;top:293.0px;" width="18" height="18" viewBox="0 0 18 18"><circle cx="11.5" cy="9" r="4.5" fill="#5cb8e8"/><circle cx="7" cy="6.5" r="4.5" fill="#f5e21b"/><circle cx="7" cy="11.5" r="4.5" fill="#e03a48"/></svg>
<svg class="r" style="left:18.0px;top:1276.0px;" width="18" height="18" viewBox="0 0 18 18"><path d="M7.41 4.26L7.81 1.49L10.19 1.49L10.59 4.26L12.31 5.25L14.91 4.22L16.10 6.28L13.90 8.01L13.90 9.99L16.10 11.72L14.91 13.78L12.31 12.75L10.59 13.74L10.19 16.51L7.81 16.51L7.41 13.74L5.69 12.75L3.09 13.78L1.90 11.72L4.10 9.99L4.10 8.01L1.90 6.28L3.09 4.22L5.69 5.25Z" fill="none" stroke="#fbfbfe" stroke-width="1.5" stroke-linejoin="round"/><circle cx="9" cy="9" r="2.3" fill="none" stroke="#fbfbfe" stroke-width="1.4"/></svg>
<div class="r" style="left:52px;top:139px;width:72px;height:1168px;background:#0f0f11;"></div>
<div class="r" style="left:124px;top:139px;width:240px;height:1168px;background:#151618;"></div>
<div class="r" style="left:364px;top:139px;width:1876px;height:1168px;background:#18191c;"></div>
<div class="r" style="left:2240px;top:139px;width:239px;height:1168px;background:#151618;"></div>
<div class="r" style="left:2479px;top:139px;width:1px;height:1168px;background:#1d2024;"></div>
<div class="r" style="left:2480px;top:139px;width:1px;height:1168px;background:#2d3a46;"></div>
<div class="r" style="left:64px;top:151px;width:48px;height:48px;background:#1b1c1f;border-radius:50%"></div>
<svg class="r" style="left:74.5px;top:164.5px;" width="27" height="21" viewBox="0 0 27 21"><path transform="scale(.2124)" d="M107.7,8.07A105.15,105.15,0,0,0,81.47,0a72.06,72.06,0,0,0-3.36,6.83A97.68,97.68,0,0,0,49,6.83,72.37,72.37,0,0,0,45.64,0,105.89,105.89,0,0,0,19.39,8.09C2.79,32.65-1.71,56.6.54,80.21h0A105.73,105.73,0,0,0,32.71,96.36,77.7,77.7,0,0,0,39.6,85.25a68.42,68.42,0,0,1-10.85-5.18c.91-.66,1.8-1.34,2.66-2a75.57,75.57,0,0,0,64.32,0c.87.71,1.76,1.39,2.66,2a68.68,68.68,0,0,1-10.87,5.19,77,77,0,0,0,6.89,11.1A105.25,105.25,0,0,0,126.6,80.22h0C129.24,52.84,122.09,29.11,107.7,8.07ZM42.45,65.69C36.18,65.69,31,60,31,53s5-12.74,11.43-12.74S54,46,53.89,53,48.84,65.69,42.45,65.69Zm42.24,0C78.41,65.69,73.25,60,73.25,53s5-12.74,11.44-12.74S96.23,46,96.12,53,91.08,65.69,84.69,65.69Z" fill="#76777b"/></svg>
<div class="r" style="left:72px;top:210px;width:32px;height:2px;background:#121315;"></div>
<div class="r" style="left:64px;top:224px;width:48px;height:48px;background:#2d3382;border-radius:16px"></div>
<div class="a" style="left:81.5px;top:240.46px;font-size:16px;line-height:16px;color:#8a8b98;font-weight:700;">G</div>
<div class="r" style="left:64px;top:280px;width:48px;height:48px;background:#18191c;border-radius:50%"></div>
<svg class="r" style="left:79.0px;top:295.0px;" width="18" height="18" viewBox="0 0 18 18"><path d="M9 1v16M1 9h16" stroke="#1b7a3c" stroke-width="2.2"/></svg>
<div class="r" style="left:124px;top:187px;width:2116px;height:1px;background:#101113;"></div>
<div class="a" style="left:140.5px;top:154.91px;font-size:17px;line-height:17px;color:#8e9096;font-weight:700;letter-spacing:-0.4px">General Community</div>
<div class="r" style="left:338.8px;top:159.4px;width:2.4px;height:2.4px;background:#9c9da1;border-radius:50%"></div>
<div class="r" style="left:338.8px;top:164.10000000000002px;width:2.4px;height:2.4px;background:#9c9da1;border-radius:50%"></div>
<div class="r" style="left:338.8px;top:168.8px;width:2.4px;height:2.4px;background:#9c9da1;border-radius:50%"></div>
<div class="a" style="left:140.7px;top:198.84px;font-size:12px;line-height:12px;color:#6d6f74;font-weight:700;letter-spacing:0.1px">TEXT CHANNELS</div>
<svg class="r" style="left:338.0px;top:200.8px;" width="10" height="10" viewBox="0 0 10 10"><path d="M5 1v8M1 5h8" stroke="#7e7f84" stroke-width="1.6"/></svg>
<div class="r" style="left:132px;top:221px;width:202px;height:41px;background:#1f2024;border-radius:5px"></div>
<div class="a" style="left:140px;top:232.76px;font-size:18px;line-height:18px;color:#8b8d92;font-weight:400;">#</div>
<div class="a" style="left:159.5px;top:232.76px;font-size:18px;line-height:18px;color:#8b8d92;font-weight:400;">#</div>
<div class="a" style="left:182.6px;top:233.01px;font-size:17px;line-height:17px;color:#8b8d92;font-weight:400;">general</div>
<div class="a" style="left:140px;top:275.76px;font-size:18px;line-height:18px;color:#6b6d72;font-weight:400;">#</div>
<div class="a" style="left:159.5px;top:275.76px;font-size:18px;line-height:18px;color:#6b6d72;font-weight:400;">#</div>
<div class="a" style="left:182.6px;top:275.61px;font-size:17px;line-height:17px;color:#6b6d72;font-weight:400;">random</div>
<div class="a" style="left:140.5px;top:325.84px;font-size:12px;line-height:12px;color:#6d6f74;font-weight:700;letter-spacing:0.1px">VOICE CHANNELS</div>
<svg class="r" style="left:338.0px;top:327.8px;" width="10" height="10" viewBox="0 0 10 10"><path d="M5 1v8M1 5h8" stroke="#7e7f84" stroke-width="1.6"/></svg>
<svg class="r" style="left:141px;top:358px" width="18" height="18" viewBox="0 0 18 18"><defs><linearGradient id="sg" x1="0" x2="1"><stop offset="0" stop-color="#4a4a4c"/><stop offset="1" stop-color="#77777a"/></linearGradient></defs><path d="M1.2 5.8H5L9.4 2.2V15.8L5 12.2H1.2z" fill="url(#sg)" stroke="#050505" stroke-width="1"/><path d="M11.00 6.95A2.6 2.6 0 0 1 11.00 11.05M12.11 5.53A4.4 4.4 0 0 1 12.11 12.47M13.22 4.11A6.2 6.2 0 0 1 13.22 13.89" fill="none" stroke="#050505" stroke-width="2"/><path d="M11.00 6.95A2.6 2.6 0 0 1 11.00 11.05M12.11 5.53A4.4 4.4 0 0 1 12.11 12.47M13.22 4.11A6.2 6.2 0 0 1 13.22 13.89" fill="none" stroke="#2a86b8" stroke-width="0.9"/></svg>
<svg class="r" style="left:169.3px;top:357.2px" width="20.160000000000004" height="20.160000000000004" viewBox="0 0 18 18"><defs><linearGradient id="sg" x1="0" x2="1"><stop offset="0" stop-color="#4a4a4c"/><stop offset="1" stop-color="#77777a"/></linearGradient></defs><path d="M1.2 5.8H5L9.4 2.2V15.8L5 12.2H1.2z" fill="url(#sg)" stroke="#050505" stroke-width="1"/><path d="M11.00 6.95A2.6 2.6 0 0 1 11.00 11.05M12.11 5.53A4.4 4.4 0 0 1 12.11 12.47M13.22 4.11A6.2 6.2 0 0 1 13.22 13.89" fill="none" stroke="#050505" stroke-width="2"/><path d="M11.00 6.95A2.6 2.6 0 0 1 11.00 11.05M12.11 5.53A4.4 4.4 0 0 1 12.11 12.47M13.22 4.11A6.2 6.2 0 0 1 13.22 13.89" fill="none" stroke="#2a86b8" stroke-width="0.9"/></svg>
<div class="a" style="left:195px;top:358.86px;font-size:16.7px;line-height:16.7px;color:#6d6f74;font-weight:400;">Voice General</div>
<div class="r" style="left:124px;top:1219px;width:240px;height:52.5px;background:#101113;"></div>
<div class="r" style="left:136px;top:1228.7px;width:32px;height:32px;background:#26272b;border-radius:50%"></div>
<div class="a" style="left:176px;top:1229.45px;font-size:14px;line-height:14px;color:#8e9096;font-weight:700;">swefpifh</div>
<div class="a" style="left:176px;top:1248.83px;font-size:13.2px;line-height:13.2px;color:#6d6f74;font-weight:400;">#0002</div>
<svg class="r" style="left:303.0px;top:1236.0px;" width="22" height="22" viewBox="0 0 22 22"><path d="M9.42 4.18L9.96 1.56L12.04 1.56L12.58 4.18L14.70 5.06L16.94 3.59L18.41 5.06L16.94 7.30L17.82 9.42L20.44 9.96L20.44 12.04L17.82 12.58L16.94 14.70L18.41 16.94L16.94 18.41L14.70 16.94L12.58 17.82L12.04 20.44L9.96 20.44L9.42 17.82L7.30 16.94L5.06 18.41L3.59 16.94L5.06 14.70L4.18 12.58L1.56 12.04L1.56 9.96L4.18 9.42L5.06 7.30L3.59 5.06L5.06 3.59L7.30 5.06Z" fill="none" stroke="#4b4d52" stroke-width="1.5" stroke-linejoin="round"/><circle cx="11" cy="11" r="2.9" fill="none" stroke="#4b4d52" stroke-width="1.5"/></svg>
<svg class="r" style="left:335.6px;top:1237.0px;" width="20" height="20" viewBox="0 0 20 20"><g fill="none" stroke="#4b4d52" stroke-width="1.5" stroke-linecap="round" stroke-linejoin="round"><path d="M8.2 2.5H5a2 2 0 0 0-2 2v11a2 2 0 0 0 2 2h3.2"/><path d="M7.5 10h10.6M14 5.6l4.2 4.4-4.2 4.4"/></g></svg>
<div class="a" style="left:134.4px;top:1286.20px;font-size:10.4px;line-height:10.4px;color:#2a2b2f;font-weight:400;">PHP 8.2.29 | 15:33</div>
<div class="a" style="left:380.3px;top:154.76px;font-size:18px;line-height:18px;color:#5d5f64;font-weight:400;">#</div>
<div class="a" style="left:398.5px;top:154.91px;font-size:17px;line-height:17px;color:#8e9096;font-weight:700;">general</div>
<svg class="r" style="left:1952.0px;top:155.0px;" width="22" height="20" viewBox="0 0 22 20"><g fill="none" stroke="#24262a" stroke-width="1.6"><circle cx="8" cy="6" r="3.6"/><path d="M1.5 18c0-4 3-6 6.5-6s6.5 2 6.5 6"/><path d="M14 2.6a3.6 3.6 0 0 1 0 7M17 12c2 .8 3.5 2.6 3.5 6"/></g></svg>
<svg class="r" style="left:1992.0px;top:154.0px;" width="18" height="22" viewBox="0 0 18 22"><g fill="none" stroke="#24262a" stroke-width="1.6"><path d="M9 20.5s-7-6.5-7-11.5a7 7 0 0 1 14 0c0 5-7 11.5-7 11.5z"/><circle cx="9" cy="9" r="2.6"/></g></svg>
<div class="r" style="left:2024px;top:139px;width:80px;height:22px;background:#101113;border-bottom-left-radius:4px"></div>
<svg class="r" style="left:2077.0px;top:144.0px;" width="14" height="9" viewBox="0 0 14 9"><path d="M1.5 1.5L7 7l5.5-5.5" fill="none" stroke="#26282c" stroke-width="1.4"/></svg>
<div class="r" style="left:2023px;top:161px;width:199.5px;height:29px;background:#0e0f11;border-radius:0 6px 6px 6px"></div>
<div class="a" style="left:2031.5px;top:168.24px;font-size:13.6px;line-height:13.6px;color:#6d6f74;font-weight:400;">Search...</div>
<div class="a" style="left:2248px;top:166.84px;font-size:12px;line-height:12px;color:#6d6f74;font-weight:700;">MEMBERS — 2</div>
<div class="a" style="left:2256px;top:209.49px;font-size:19.5px;line-height:19.5px;color:#8e9096;font-weight:400;">#</div>
<div class="r" style="left:2276px;top:203px;width:32px;height:32px;background:#145a2e;border-radius:50%"></div>
<div class="r" style="left:2297.5px;top:224.5px;width:10.5px;height:10.5px;background:#1c7b3c;border-radius:50%;border:2.5px solid #151618"></div>
<div class="a" style="left:2316.6px;top:210.61px;font-size:17px;line-height:17px;color:#8e9096;font-weight:400;">System</div>
<div class="a" style="left:2256px;top:261.49px;font-size:19.5px;line-height:19.5px;color:#8e9096;font-weight:400;">#</div>
<div class="r" style="left:2276px;top:255px;width:32px;height:32px;background:#45464b;border-radius:50%"></div>
<div class="a" style="left:2316.6px;top:262.19px;font-size:17.5px;line-height:17.5px;color:#8e9096;font-weight:400;">swefpifh</div>
<div class="r" style="left:380px;top:1235px;width:1844px;height:47.5px;background:#1d1e21;border-radius:8px"></div>
<svg class="r" style="left:396.0px;top:1247.0px;" width="24" height="24" viewBox="0 0 24 24"><g fill="none" stroke="#4b4d52" stroke-width="1.8"><circle cx="12" cy="12" r="10.2"/><path d="M12 7v10M7 12h10"/></g></svg>
<div class="a" style="left:434px;top:1251.52px;font-size:17.1px;line-height:17.1px;color:#4b4d52;font-weight:400;">Message #general</div>
<div class="r" style="left:52px;top:1307px;width:2429px;height:1px;background:#34454a;"></div>
<div class="r" style="left:1017px;top:168px;width:498px;height:776px;background:#2b2d31;border-radius:8px"></div>
<div class="a" style="left:1033.6px;top:188.97px;font-size:21.3px;line-height:21.3px;color:#f2f3f5;font-weight:400;">Channel Settings</div>
<svg class="r" style="left:1482.0px;top:190.0px;" width="18" height="18" viewBox="0 0 18 18"><path d="M1.5 1.5l15 15M16.5 1.5l-15 15" stroke="#b5b6ba" stroke-width="2"/></svg>
<div class="r" style="left:1017px;top:230px;width:498px;height:1px;background:#1f2023;"></div>
<div class="a" style="left:1017px;top:247px;width:234px;text-align:center;font-size:14.8px;line-height:14.8px;font-weight:700;color:#f2f3f5;letter-spacing:-0.2px">General</div>
<div class="a" style="left:1251px;top:247px;width:264px;text-align:center;font-size:14.3px;line-height:14.3px;font-weight:700;color:#f2f3f5">Permissions</div>
<div class="r" style="left:1251px;top:277px;width:264px;height:3px;background:#1e1f22;"></div>
<div class="r" style="left:1251px;top:278px;width:264px;height:1px;background:#e3e5e8;"></div>
<div class="r" style="left:1017px;top:277px;width:234px;height:2px;background:#5865f2;"></div>
<div class="a" style="left:1033px;top:303.63px;font-size:11.3px;line-height:11.3px;color:#a6a8ad;font-weight:700;">CHANNEL TYPE</div>
<div class="r" style="left:1033px;top:325px;width:466px;height:38px;background:#1f2125;border:1px solid #666b73;border-radius:6px"></div>
<div class="a" style="left:1046px;top:335.81px;font-size:17px;line-height:17px;color:#f2f3f5;font-weight:400;">Traditional Chat</div>
<svg class="r" style="left:1470.5px;top:339.0px;" width="14" height="9" viewBox="0 0 14 9"><path d="M1.5 1.5L7 7l5.5-5.5" fill="none" stroke="#3d4046" stroke-width="1.5"/></svg>
<div class="a" style="left:1033px;top:387.83px;font-size:11.3px;line-height:11.3px;color:#a6a8ad;font-weight:700;">CHANNEL NAME</div>
<div class="r" style="left:1033px;top:409px;width:466px;height:36px;background:#1e1f22;border-radius:6px"></div>
<div class="a" style="left:1033px;top:469.93px;font-size:11.3px;line-height:11.3px;color:#a6a8ad;font-weight:700;">CHANNEL ICON</div>
<div class="r" style="left:1033px;top:492px;width:466px;height:38px;background:#1f2125;border:1px solid #666b73;border-radius:6px"></div>
<div class="a" style="left:1046px;top:502.81px;font-size:17px;line-height:17px;color:#f2f3f5;font-weight:400;">Default (Based on type)</div>
<svg class="r" style="left:1470.5px;top:506.0px;" width="14" height="9" viewBox="0 0 14 9"><path d="M1.5 1.5L7 7l5.5-5.5" fill="none" stroke="#3d4046" stroke-width="1.5"/></svg>
<div class="r" style="left:1033px;top:550px;width:32px;height:16px;background:#f2f3f5;border-radius:8px"></div>
<div class="r" style="left:1036px;top:553px;width:10px;height:10px;background:#a9aaae;border-radius:50%"></div>
<div class="a" style="left:1073.3px;top:550.41px;font-size:17px;line-height:17px;color:#f2f3f5;font-weight:400;">Allow File Sharing</div>
<div class="a" style="left:1073px;top:576.90px;font-size:13.7px;line-height:13.7px;color:#313337;font-weight:400;">When disabled, users cannot upload files in this channel.</div>
<div class="a" style="left:1033px;top:617.93px;font-size:11.3px;line-height:11.3px;color:#a6a8ad;font-weight:700;">MESSAGE LIMIT</div>
<div class="r" style="left:1033px;top:639px;width:466px;height:36px;background:#1e1f22;border-radius:6px"></div>
<div class="a" style="left:1046px;top:649.11px;font-size:17px;line-height:17px;color:#303236;font-weight:400;">No limit</div>
<div class="r" style="left:1469px;top:648px;width:18px;height:18px;background:#e9e9ed;border-radius:2px"></div>
<svg class="r" style="left:1469.0px;top:648.0px;" width="18" height="18" viewBox="0 0 18 18"><path d="M5 7l4-3.5L13 7M5 11l4 3.5 4-3.5" fill="none" stroke="#4b4b55" stroke-width="1.2"/></svg>
<div class="a" style="left:1033px;top:682.45px;font-size:14px;line-height:14px;color:#2f3135;font-weight:400;">Keep only the most recent messages.</div>
<div class="a" style="left:1033px;top:724.03px;font-size:11.3px;line-height:11.3px;color:#a6a8ad;font-weight:700;">THEME COLOR</div>
<div class="r" style="left:1033px;top:745px;width:466px;height:37.5px;background:#1e1f22;border-radius:6px"></div>
<div class="r" style="left:1039px;top:751px;width:454px;height:26px;background:#5865f2;border-radius:5px"></div>
<div class="r" style="left:1033px;top:799px;width:466px;height:38px;background:#0d6efd;border-radius:6px"></div>
<div class="a" style="left:1033px;top:800px;width:466px;height:38px;line-height:38px;text-align:center;font-size:16.8px;color:#ffffff">Save Changes</div>
<div class="r" style="left:1033px;top:845px;width:466px;height:38px;background:#ffc107;border-radius:6px"></div>
<div class="a" style="left:1033px;top:846px;width:466px;height:38px;line-height:38px;text-align:center;font-size:16.8px;color:#000000">Vider l&#x27;historique</div>
<div class="r" style="left:1033px;top:891px;width:466px;height:38px;background:#dc3545;border-radius:6px"></div>
<div class="a" style="left:1033px;top:892px;width:466px;height:38px;line-height:38px;text-align:center;font-size:16.8px;color:#ffffff">Delete Channel</div>
</body></html>
